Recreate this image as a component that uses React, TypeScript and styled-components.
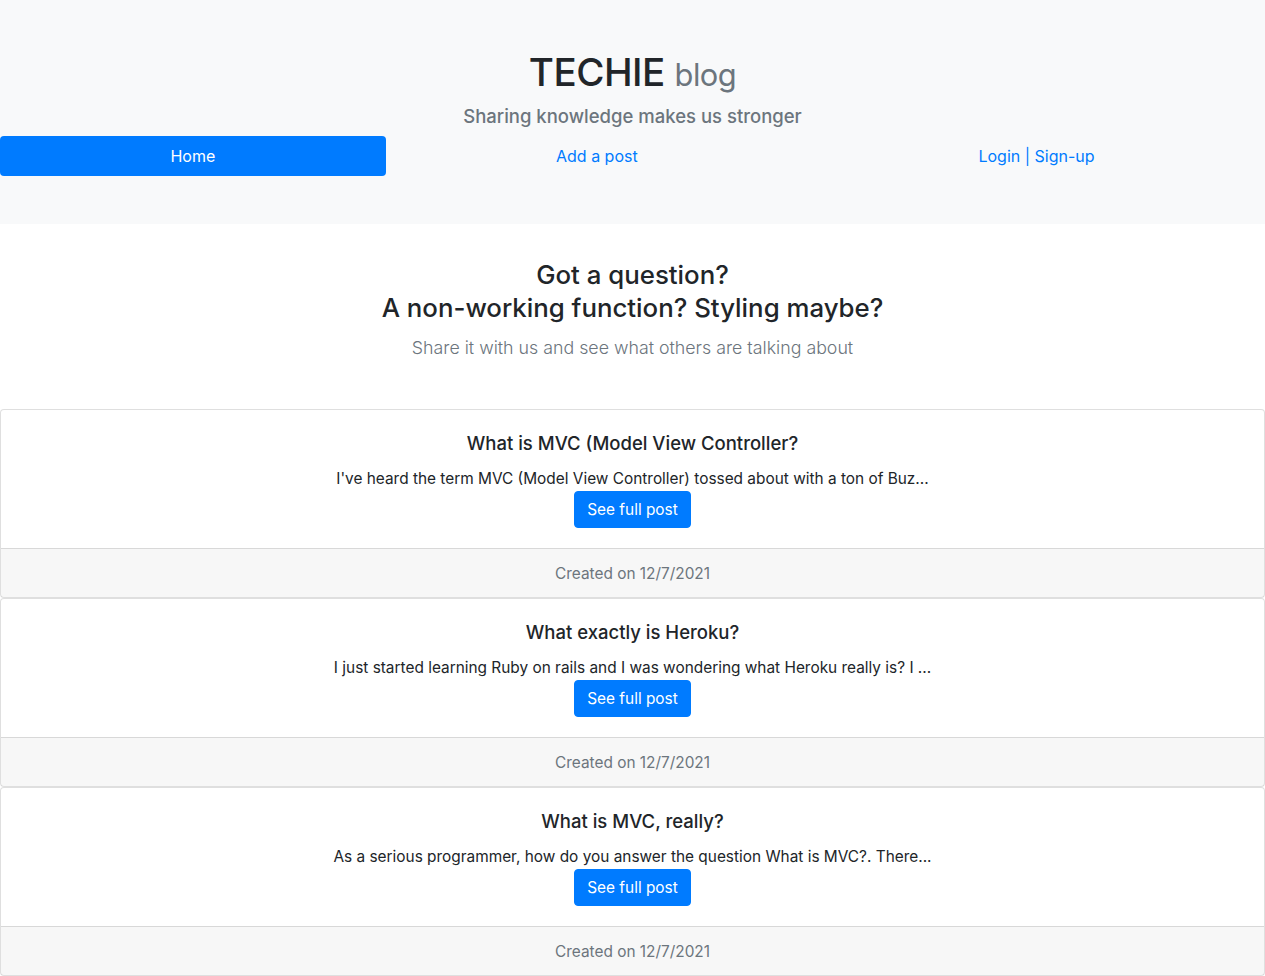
import styled, { createGlobalStyle } from "styled-components";

const GlobalStyle = createGlobalStyle`
  * {
    box-sizing: border-box;
  }
  body {
    margin: 0;
    font-family: Inter, "Noto Sans", "Liberation Sans", sans-serif;
    font-size: 16px;
    line-height: 1.5;
    color: #212529;
    background: #fff;
  }
`;

const Jumbotron = styled.header`
  background: #f8f9fa;
  padding: 48px 0;
  margin-bottom: 32px;
  text-align: center;
`;

const Brand = styled.h1`
  margin: 0 0 8px;
  font-size: 38.5px;
  font-weight: 500;
  line-height: 48px;
  letter-spacing: -0.5px;
`;

const BrandSmall = styled.small`
  font-size: 80%;
  font-weight: 400;
  line-height: 1;
  color: #6c757d;
`;

const Tagline = styled.h5`
  margin: 0 0 8px;
  font-size: 18.5px;
  font-weight: 500;
  line-height: 24px;
  color: #6c757d;
`;

const Nav = styled.nav`
  display: flex;
`;

const NavLink = styled.a<{ $active?: boolean }>`
  flex: 1 1 auto;
  display: block;
  padding: 8px 16px;
  font-size: 16px;
  line-height: 24px;
  text-align: center;
  text-decoration: none;
  border-radius: 4px;
  color: ${(p) => (p.$active ? "#fff" : "#007bff")};
  background: ${(p) => (p.$active ? "#007bff" : "transparent")};
`;

const Intro = styled.section`
  text-align: center;
  padding-top: 2px;
  margin-bottom: 46px;
`;

const Headline = styled.h3`
  margin: 0 0 9px;
  font-size: 25.8px;
  font-weight: 500;
  line-height: 33px;
`;

const Lead = styled.p`
  margin: 0;
  font-size: 17.8px;
  font-weight: 300;
  line-height: 30px;
  color: #6c757d;
`;

const Card = styled.article`
  display: flex;
  flex-direction: column;
  border: 1px solid rgba(0, 0, 0, 0.125);
  border-radius: 4px;
  background: #fff;
  text-align: center;
`;

const CardBody = styled.div`
  padding: 21px 20px 20px;
`;

const CardTitle = styled.h5`
  margin: 0 0 11px;
  font-size: 18.5px;
  font-weight: 500;
  line-height: 24px;
`;

const CardText = styled.div`
  font-size: 15.4px;
  line-height: 25px;
`;

const Button = styled.a`
  display: inline-block;
  padding: 6px 12px;
  font-size: 15.4px;
  line-height: 23px;
  color: #fff;
  background: #007bff;
  border: 1px solid #007bff;
  border-radius: 4px;
  text-decoration: none;
`;

const CardFooter = styled.div`
  padding: 13px 20px 11px;
  background: rgba(0, 0, 0, 0.03);
  border-top: 1px solid rgba(0, 0, 0, 0.125);
  color: #6c757d;
  font-size: 15.4px;
  line-height: 24px;
`;

const posts = [
  {
    title: "What is MVC (Model View Controller?",
    excerpt:
      "I've heard the term MVC (Model View Controller) tossed about with a ton of Buz...",
  },
  {
    title: "What exactly is Heroku?",
    excerpt:
      "I just started learning Ruby on rails and I was wondering what Heroku really is? I ...",
  },
  {
    title: "What is MVC, really?",
    excerpt:
      "As a serious programmer, how do you answer the question What is MVC?. There...",
  },
];

const App = () => {
  return (
    <>
      <GlobalStyle />
      <Jumbotron>
        <Brand>
          TECHIE <BrandSmall>blog</BrandSmall>
        </Brand>
        <Tagline>Sharing knowledge makes us stronger</Tagline>
        <Nav>
          <NavLink $active href="#">
            Home
          </NavLink>
          <NavLink href="#">Add a post</NavLink>
          <NavLink href="#">Login | Sign-up</NavLink>
        </Nav>
      </Jumbotron>
      <Intro>
        <Headline>
          Got a question?
          <br />
          A non-working function? Styling maybe?
        </Headline>
        <Lead>Share it with us and see what others are talking about</Lead>
      </Intro>
      {posts.map((post) => (
        <Card key={post.title}>
          <CardBody>
            <CardTitle>{post.title}</CardTitle>
            <CardText>{post.excerpt}</CardText>
            <Button href="#">See full post</Button>
          </CardBody>
          <CardFooter>Created on 12/7/2021</CardFooter>
        </Card>
      ))}
    </>
  );
};

export default App;
